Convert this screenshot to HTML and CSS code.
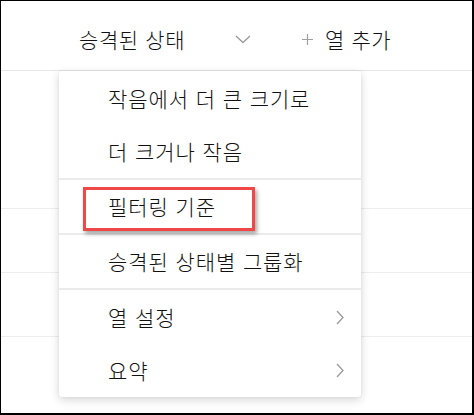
FILE: index.html
```html
<!DOCTYPE html>
<html lang="ko">
<head>
<meta charset="utf-8">
<title>열 메뉴</title>
<link rel="stylesheet" href="styles.css">
</head>
<body>
<div class="frame">
  <div class="header">
    <span class="col-title">승격된 상태</span>
    <svg class="chev-down" width="16" height="9" viewBox="0 0 16 9"><polyline points="1,1 8,7.5 15,1" fill="none" stroke="#9a9a9a" stroke-width="1.3"/></svg>
    <svg class="plus" width="11" height="11" viewBox="0 0 11 11"><path d="M5.5 0V11M0 5.5H11" stroke="#a0a0a0" stroke-width="1.2"/></svg>
    <span class="add-col">열 추가</span>
  </div>
  <div class="rows">
    <div class="row row-tall"></div>
    <div class="row"></div>
    <div class="row"></div>
    <div class="row row-last"></div>
  </div>

  <div class="menu">
    <div class="group">
      <div class="item"><span>작음에서 더 큰 크기로</span></div>
      <div class="item"><span>더 크거나 작음</span></div>
    </div>
    <div class="group">
      <div class="item"><span>필터링 기준</span></div>
    </div>
    <div class="group">
      <div class="item"><span>승격된 상태별 그룹화</span></div>
    </div>
    <div class="group last">
      <div class="item"><span>열 설정</span><svg class="chev-right" width="8" height="15" viewBox="0 0 8 15"><polyline points="1,1 7,7.5 1,14" fill="none" stroke="#9a9a9a" stroke-width="1.3"/></svg></div>
      <div class="item"><span>요약</span><svg class="chev-right" width="8" height="15" viewBox="0 0 8 15"><polyline points="1,1 7,7.5 1,14" fill="none" stroke="#9a9a9a" stroke-width="1.3"/></svg></div>
    </div>
  </div>

  <div class="highlight"></div>
</div>
</body>
</html>
```

FILE: styles.css
```css
* { box-sizing: border-box; }

html, body {
  margin: 0;
  padding: 0;
  background: #ffffff;
}

body {
  font-family: "Noto Sans CJK KR", "Noto Sans", sans-serif;
  font-weight: 300;
  color: #111111;
}

.frame {
  position: relative;
  width: 474px;
  height: 415px;
  border-style: solid;
  border-color: #000000;
  border-width: 1px 2px 2px 1px;
  background: #ffffff;
  overflow: hidden;
}

.header {
  display: flex;
  align-items: center;
  height: 70px;
  padding: 8px 0 0 78px;
  border-bottom: 1px solid #e6e6e6;
  font-size: 21px;
  letter-spacing: 0.6px;
  line-height: 1;
}

.col-title {
  width: 156px;
  flex: none;
  white-space: nowrap;
}

.chev-down {
  flex: none;
}

.plus {
  margin-left: 51px;
  flex: none;
}

.add-col {
  margin-left: 12px;
  white-space: nowrap;
}

.rows {
  display: flex;
  flex-direction: column;
}

.row {
  height: 64px;
  border-bottom: 1px solid #eeeeee;
}

.row-tall {
  height: 138px;
}

.row-last {
  border-bottom: none;
}

.menu {
  position: absolute;
  left: 58px;
  top: 70px;
  width: 302px;
  background: #ffffff;
  border-radius: 3px;
  box-shadow: 0 3px 10px rgba(0, 0, 0, 0.16), 0 0 3px rgba(0, 0, 0, 0.06);
}

.group {
  border-bottom: 2px solid #ebebeb;
}

.group.last {
  border-bottom: none;
}

.item {
  display: flex;
  align-items: center;
  justify-content: space-between;
  height: 54px;
  padding: 0 17px 0 49px;
  font-size: 21px;
  letter-spacing: 0.9px;
  line-height: 1;
  white-space: nowrap;
}

.item:last-child {
  height: 53px;
}

.chev-right {
  flex: none;
}

.highlight {
  position: absolute;
  left: 82px;
  top: 186px;
  width: 172px;
  height: 44px;
  border: 3px solid #f04848;
  box-shadow: 2px 3px 4px rgba(0, 0, 0, 0.35);
}
```
